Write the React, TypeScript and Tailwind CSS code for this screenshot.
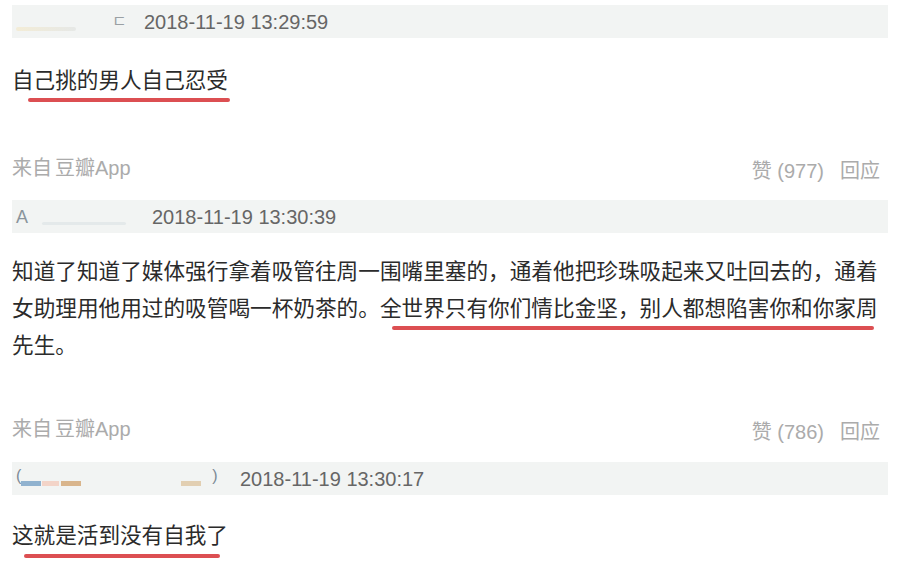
const font = {
  fontFamily: '"Liberation Sans", "Noto Sans CJK SC", sans-serif',
};

type BarProps = {
  date: string;
  nameWidth: string;
  children?: React.ReactNode;
};

function HeaderBar({ date, nameWidth, children }: BarProps) {
  return (
    <div className="mx-3 flex h-[33px] items-center bg-[#f2f4f3]">
      <div className={`flex h-full shrink-0 items-center pl-[4px] ${nameWidth}`}>{children}</div>
      <span className="text-[20px] leading-none text-[#666]">{date}</span>
    </div>
  );
}

function Meta({ likes }: { likes: number }) {
  return (
    <div className="flex h-[28px] items-start justify-between px-3 text-[20px] leading-[28px] text-[#ababab]">
      <span>
        来自<span className="ml-[3px]">豆瓣App</span>
      </span>
      <span className="mt-[3px] pr-[8px]">
        赞 ({likes})<span className="ml-[16px]">回应</span>
      </span>
    </div>
  );
}

function Mark({ left, width, top }: { left: string; width: string; top: string }) {
  return (
    <span
      className={`pointer-events-none absolute h-[4px] rounded-full bg-[#dc4f52] ${left} ${width} ${top}`}
    />
  );
}

export default function App() {
  return (
    <div className="h-[574px] w-[900px] overflow-hidden bg-white" style={font}>
      <div className="flex flex-col pt-[5px]">
        <HeaderBar date="2018-11-19 13:29:59" nameWidth="w-[132px]">
          <span className="mt-[14px] h-[4px] w-[60px] rounded-full bg-gradient-to-r from-[#f3ecd6] to-[#e6e8e6]" />
          <span className="ml-[36px] text-[16px] leading-none text-[#9aa0a4]">ㄷ</span>
        </HeaderBar>

        <div className="mt-[27px] px-3 text-[21.6px] leading-[32px] text-[#2b2b2b]">
          <span className="relative inline-block">
            自己挑的男人自己忍受
            <Mark left="left-[16px]" width="w-[202px]" top="top-[33px]" />
          </span>
        </div>

        <div className="mt-[57px]">
          <Meta likes={977} />
        </div>

        <div className="mt-[18px]">
          <HeaderBar date="2018-11-19 13:30:39" nameWidth="w-[140px]">
            <span className="text-[18px] leading-none text-[#8a949c]">A</span>
            <span className="ml-[14px] mt-[14px] h-[3px] w-[84px] rounded-full bg-[#e4e9ea]" />
          </HeaderBar>
        </div>

        <div className="mt-[20px] px-3 text-[21.65px] leading-[37px] whitespace-nowrap text-[#2b2b2b]">
          <div>知道了知道了媒体强行拿着吸管往周一围嘴里塞的，通着他把珍珠吸起来又吐回去的，通着</div>
          <div>
            女助理用他用过的吸管喝一杯奶茶的。
            <span className="relative">
              全世界只有你们情比金坚，别人都想陷害你和你家周
              <Mark left="left-[12px]" width="w-[482px]" top="top-[30px]" />
            </span>
          </div>
          <div>先生。</div>
        </div>

        <div className="mt-[51px]">
          <Meta likes={786} />
        </div>

        <div className="mt-[19px]">
          <HeaderBar date="2018-11-19 13:30:17" nameWidth="w-[228px]">
            <span className="mb-[6px] text-[16px] leading-none text-[#7c8a96]">(</span>
            <div className="mt-[10px] flex items-center">
              <span className="h-[5px] w-[20px] bg-[#90b2cf]" />
              <span className="ml-[1px] h-[5px] w-[17px] bg-[#f3d4c8]" />
              <span className="ml-[2px] h-[5px] w-[20px] bg-[#d9b58c]" />
              <span className="ml-[100px] h-[5px] w-[20px] bg-[#e2cfb2]" />
            </div>
            <span className="mb-[6px] ml-[11px] text-[16px] leading-none text-[#7c8a96]">)</span>
          </HeaderBar>
        </div>

        <div className="mt-[25px] px-3 text-[21.6px] leading-[32px] text-[#2b2b2b]">
          <span className="relative inline-block">
            这就是活到没有自我了
            <Mark left="left-[12px]" width="w-[196px]" top="top-[34px]" />
          </span>
        </div>
      </div>
    </div>
  );
}
